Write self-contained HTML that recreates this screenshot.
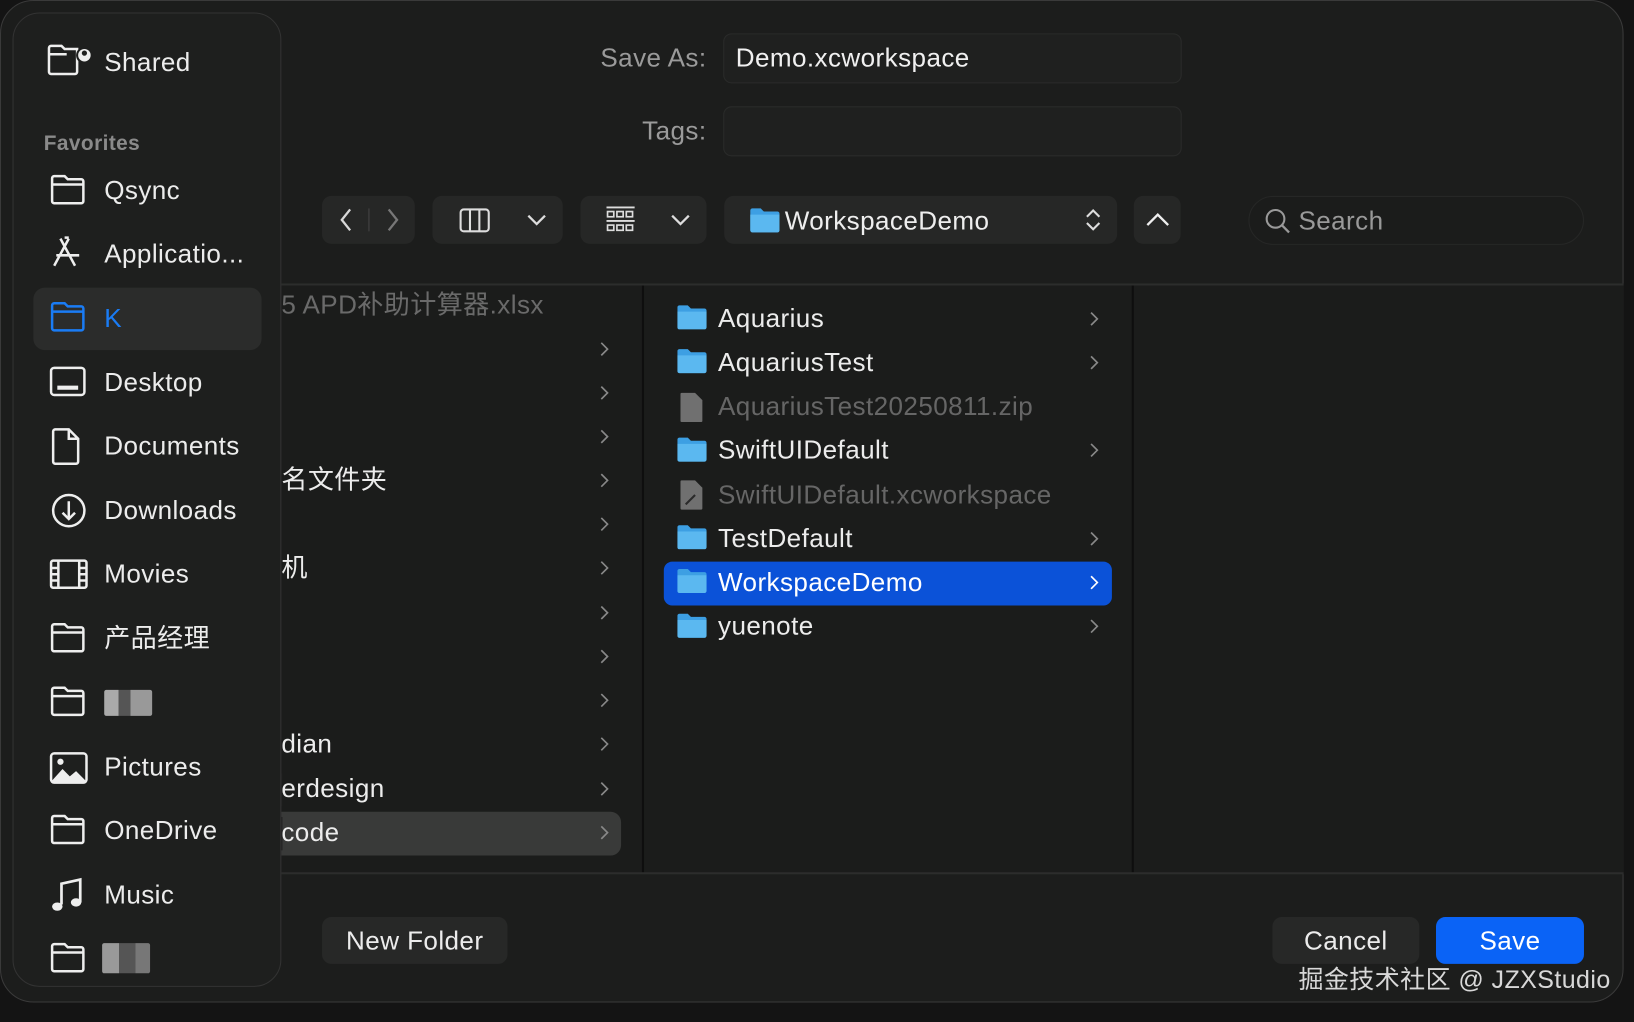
<!DOCTYPE html>
<html><head><meta charset="utf-8">
<style>
*{margin:0;padding:0;box-sizing:border-box}
html,body{width:1634px;height:1022px;overflow:hidden;background:#141414}
body{font-family:"Liberation Sans","Noto Sans CJK SC",sans-serif}
#s{position:absolute;left:0;top:0;width:1568px;height:981px;transform:scale(1.04209);transform-origin:0 0}
.a{position:absolute}
.t{position:absolute;font-size:25px;line-height:30px;color:#ececec;white-space:nowrap;letter-spacing:0.4px}
.win{left:0;top:0;width:1558px;height:962px;background:#1c1d1c;border:1.5px solid #3a3a3a;border-radius:32px;overflow:hidden}
.side{left:12px;top:12px;width:258px;height:935px;background:#1e1f1e;border:1.5px solid #333;border-radius:26px}
.btn{position:absolute;background:#262726;border-radius:9px}
.ic{position:absolute}
</style></head><body>
<div id="s">
<div class="a win"></div>
<div class="t" style="left:500px;top:41px;width:178px;text-align:right;color:#9a9a9a">Save As:</div>
<div class="a" style="left:694px;top:32px;width:440px;height:48px;background:#1f201f;border:1px solid #2a2b2a;border-radius:8px"></div>
<div class="t" style="left:706px;top:41px;color:#f0f0f0">Demo.xcworkspace</div>
<div class="t" style="left:500px;top:111px;width:178px;text-align:right;color:#9a9a9a">Tags:</div>
<div class="a" style="left:694px;top:102px;width:440px;height:48px;background:#1f201f;border:1px solid #2a2b2a;border-radius:8px"></div>

<div class="btn" style="left:309px;top:188px;width:89px;height:46px"></div>
<svg class="ic" style="left:309px;top:188px" width="89" height="46"><path d="M27 13 L19 23 L27 33" stroke="#d8d8d8" stroke-width="2.2" fill="none"/><path d="M64 13 L72 23 L64 33" stroke="#777" stroke-width="2.2" fill="none"/><path d="M45 12V34" stroke="#3a3a3a" stroke-width="1.5"/></svg>
<div class="btn" style="left:415px;top:188px;width:125px;height:46px"></div>
<svg class="ic" style="left:415px;top:188px" width="125" height="46"><rect x="27" y="13" width="27" height="21" rx="3" stroke="#ddd" stroke-width="2" fill="none"/><path d="M36 13V34M45 13V34" stroke="#ddd" stroke-width="2"/><path d="M92 19 L100 27 L108 19" stroke="#ddd" stroke-width="2.2" fill="none"/></svg>
<div class="btn" style="left:557px;top:188px;width:121px;height:46px"></div>
<svg class="ic" style="left:557px;top:188px" width="121" height="46"><path d="M25 11H52M25 24H52" stroke="#ddd" stroke-width="1.8"/><g fill="none" stroke="#ddd" stroke-width="1.6"><rect x="26" y="15" width="6" height="5"/><rect x="35" y="15" width="6" height="5"/><rect x="44" y="15" width="6" height="5"/><rect x="26" y="28" width="6" height="5"/><rect x="35" y="28" width="6" height="5"/><rect x="44" y="28" width="6" height="5"/></g><path d="M88 19 L96 27 L104 19" stroke="#ddd" stroke-width="2.2" fill="none"/></svg>
<div class="btn" style="left:695px;top:188px;width:377px;height:46px"></div>
<svg class="ic" style="left:719px;top:198px" width="30" height="26"><path d="M1 4a2 2 0 0 1 2-2h8l3 3h13a2 2 0 0 1 2 2v16a2 2 0 0 1-2 2H3a2 2 0 0 1-2-2z" fill="#3d9fe3"/><path d="M1 8h28v15a2 2 0 0 1-2 2H3a2 2 0 0 1-2-2z" fill="#5bb8f0"/></svg>
<div class="t" style="left:753px;top:197px;color:#eee">WorkspaceDemo</div>
<svg class="ic" style="left:1038px;top:198px" width="22" height="26"><path d="M5 10L11 4L17 10M5 16L11 22L17 16" stroke="#ddd" stroke-width="2" fill="none"/></svg>
<div class="btn" style="left:1088px;top:188px;width:45px;height:46px"></div>
<svg class="ic" style="left:1088px;top:188px" width="45" height="46"><path d="M13 28L23 18L33 28" stroke="#eee" stroke-width="2.2" fill="none"/></svg>
<div class="a" style="left:1198px;top:188px;width:322px;height:47px;border:1px solid #262726;border-radius:24px;background:#1b1c1b"></div>
<svg class="ic" style="left:1212px;top:198px" width="28" height="28"><circle cx="12" cy="12" r="8.5" stroke="#999" stroke-width="2" fill="none"/><path d="M18 18L25 25" stroke="#999" stroke-width="2.2"/></svg>
<div class="t" style="left:1246px;top:197px;color:#999">Search</div>

<div class="a" style="left:270px;top:272px;width:1288px;height:2px;background:#2c2d2c"></div>
<div class="a" style="left:270px;top:274px;width:1288px;height:564px;background:#1b1c1b"></div>
<div class="a" style="left:616px;top:274px;width:2px;height:564px;background:#0e0e0e"></div>
<div class="a" style="left:1086px;top:274px;width:2px;height:564px;background:#0e0e0e"></div>
<div class="a" style="left:270px;top:837px;width:1288px;height:1.5px;background:#2c2d2c"></div>

<div class="t" style="left:270px;top:278px;color:#6a6a6a">5 APD补助计算器.xlsx</div>
<div class="a" style="left:270px;top:779px;width:326px;height:42px;background:#393a39;border-radius:0 10px 10px 0"></div>
<div class="t" style="left:270px;top:446px">名文件夹</div>
<div class="t" style="left:270px;top:530px">机</div>
<div class="t" style="left:270px;top:699px">dian</div>
<div class="t" style="left:270px;top:742px">erdesign</div>
<div class="a" style="left:262px;top:742px;width:9px;height:32px;background:#1e1f1e"></div>
<div class="t" style="left:270px;top:784px">code</div>
<div class="a" style="left:264px;top:784px;width:7px;height:32px;background:#1e1f1e"></div>
<svg class="ic" style="left:574px;top:320px" width="14" height="500"><g stroke="#888" stroke-width="1.6" fill="none">
<path d="M3 9l6 6-6 6"/><path d="M3 9l6 6-6 6" transform="translate(0,42)"/><path d="M3 9l6 6-6 6" transform="translate(0,84)"/><path d="M3 9l6 6-6 6" transform="translate(0,126)"/><path d="M3 9l6 6-6 6" transform="translate(0,168)"/><path d="M3 9l6 6-6 6" transform="translate(0,210)"/><path d="M3 9l6 6-6 6" transform="translate(0,253)"/><path d="M3 9l6 6-6 6" transform="translate(0,295)"/><path d="M3 9l6 6-6 6" transform="translate(0,337)"/><path d="M3 9l6 6-6 6" transform="translate(0,379)"/><path d="M3 9l6 6-6 6" transform="translate(0,422)"/><path d="M3 9l6 6-6 6" transform="translate(0,464)"/></g></svg>

<div class="a" style="left:637px;top:539px;width:430px;height:42px;background:#0b52d8;border-radius:8px"></div>
<svg class="ic" style="left:650px;top:292px" width="30" height="330">
<defs><g id="bf"><path d="M0 3a2 2 0 0 1 2-2h8l3 3h13a2 2 0 0 1 2 2v16a2 2 0 0 1-2 2H2a2 2 0 0 1-2-2z" fill="#3d9fe3"/><path d="M0 7h28v15a2 2 0 0 1-2 2H2a2 2 0 0 1-2-2z" fill="#5bb8f0"/></g></defs>
<use href="#bf" y="0"/><use href="#bf" y="42"/><use href="#bf" y="127"/><use href="#bf" y="211"/><use href="#bf" y="253"/><use href="#bf" y="296"/>
<path d="M4 85h13l7 7v20a1 1 0 0 1-1 1H4a1 1 0 0 1-1-1V86a1 1 0 0 1 1-1z" fill="#707070"/>
<path d="M4 169h13l7 7v20a1 1 0 0 1-1 1H4a1 1 0 0 1-1-1V170a1 1 0 0 1 1-1z" fill="#707070"/><path d="M8 192l9-9" stroke="#2a2a2a" stroke-width="2"/>
</svg>
<div class="t" style="left:689px;top:291px">Aquarius</div>
<div class="t" style="left:689px;top:333px">AquariusTest</div>
<div class="t" style="left:689px;top:375px;color:#666">AquariusTest20250811.zip</div>
<div class="t" style="left:689px;top:417px">SwiftUIDefault</div>
<div class="t" style="left:689px;top:460px;color:#666">SwiftUIDefault.xcworkspace</div>
<div class="t" style="left:689px;top:502px">TestDefault</div>
<div class="t" style="left:689px;top:544px;color:#fff">WorkspaceDemo</div>
<div class="t" style="left:689px;top:586px">yuenote</div>
<svg class="ic" style="left:1044px;top:291px" width="14" height="330"><g stroke="#888" stroke-width="1.6" fill="none">
<path d="M3 9l6 6-6 6"/><path d="M3 51l6 6-6 6"/><path d="M3 135l6 6-6 6"/><path d="M3 220l6 6-6 6"/><path d="M3 262l6 6-6 6" stroke="#fff"/><path d="M3 304l6 6-6 6"/></g></svg>

<div class="btn" style="left:309px;top:880px;width:178px;height:45px;background:#272827"></div>
<div class="t" style="left:309px;top:888px;width:178px;text-align:center">New Folder</div>
<div class="btn" style="left:1221px;top:880px;width:141px;height:45px;background:#272827"></div>
<div class="t" style="left:1221px;top:888px;width:141px;text-align:center">Cancel</div>
<div class="btn" style="left:1378px;top:880px;width:142px;height:45px;background:#0a63f6"></div>
<div class="t" style="left:1378px;top:888px;width:142px;text-align:center;color:#fff">Save</div>
<div class="t" style="left:1246px;top:926px;font-size:24px;color:#d8d8d8">掘金技术社区 @ JZXStudio</div>

<div class="a side"></div>
<div class="a" style="left:32px;top:276px;width:219px;height:60px;background:#2b2c2b;border-radius:11px"></div>
<svg class="ic" style="left:44px;top:40px" width="220" height="900"><g fill="none" stroke="#eee" stroke-width="2.4">
<path d="M3 6a2 2 0 0 1 2-2h10l3 3h12v22a2 2 0 0 1-2 2H5a2 2 0 0 1-2-2z M3 12h17"/>
<path d="M6 131a2 2 0 0 1 2-2h10l3 3h13a2 2 0 0 1 2 2v19a2 2 0 0 1-2 2H8a2 2 0 0 1-2-2z M6 137h30"/>
<path d="M22 189l-14 26M14 189l14 26M10 205h22M18 188h4"/>
<path d="M6 253a2 2 0 0 1 2-2h10l3 3h13a2 2 0 0 1 2 2v19a2 2 0 0 1-2 2H8a2 2 0 0 1-2-2z M6 259h30" stroke="#1a7cf5"/>
<rect x="5" y="313" width="32" height="26" rx="3"/><path d="M11 332h20" stroke-width="4"/>
<path d="M9 372h13l9 9v22a2 2 0 0 1-2 2H9a2 2 0 0 1-2-2V374a2 2 0 0 1 2-2z M22 372v9h9"/>
<circle cx="22" cy="450" r="15"/><path d="M22 441v16M16 452l6 6 6-6"/>
<rect x="5" y="498" width="34" height="26" rx="2"/><path d="M12 498v26M32 498v26M5 505h7M5 511h7M5 517h7M32 505h7M32 511h7M32 517h7"/>
<path d="M6 561a2 2 0 0 1 2-2h10l3 3h13a2 2 0 0 1 2 2v19a2 2 0 0 1-2 2H8a2 2 0 0 1-2-2z M6 567h30"/>
<path d="M6 622a2 2 0 0 1 2-2h10l3 3h13a2 2 0 0 1 2 2v19a2 2 0 0 1-2 2H8a2 2 0 0 1-2-2z M6 628h30"/>
<rect x="5" y="683" width="34" height="28" rx="3"/>
<path d="M6 745a2 2 0 0 1 2-2h10l3 3h13a2 2 0 0 1 2 2v19a2 2 0 0 1-2 2H8a2 2 0 0 1-2-2z M6 751h30"/>
<path d="M6 868a2 2 0 0 1 2-2h10l3 3h13a2 2 0 0 1 2 2v19a2 2 0 0 1-2 2H8a2 2 0 0 1-2-2z M6 874h30"/>
</g>
<circle cx="37" cy="13" r="7" fill="#eee" stroke="#1e1f1e" stroke-width="2"/><circle cx="37" cy="11" r="2.5" fill="#1e1f1e"/>
<path d="M6 709l10-11 7 7 6-5 9 9v2H6z" fill="#eee"/><circle cx="14" cy="691" r="3" fill="#eee"/>
<path d="M15 828v-20l18-4v22" stroke="#eee" stroke-width="2.6" fill="none"/><ellipse cx="11" cy="830" rx="5" ry="4" fill="#eee"/><ellipse cx="29" cy="826" rx="5" ry="4" fill="#eee"/>
</svg>
<div class="t" style="left:100px;top:45px">Shared</div>
<div class="t" style="left:42px;top:123px;font-size:20px;color:#8a8a8a;font-weight:bold">Favorites</div>
<div class="t" style="left:100px;top:168px">Qsync</div>
<div class="t" style="left:100px;top:229px">Applicatio...</div>
<div class="t" style="left:100px;top:291px;color:#1a7cf5">K</div>
<div class="t" style="left:100px;top:352px">Desktop</div>
<div class="t" style="left:100px;top:413px">Documents</div>
<div class="t" style="left:100px;top:475px">Downloads</div>
<div class="t" style="left:100px;top:536px">Movies</div>
<div class="t" style="left:100px;top:598px">产品经理</div>
<div class="a" style="left:100px;top:662px;width:46px;height:25px;background:linear-gradient(90deg,#aaa 0 30%,#555 30% 55%,#999 55% 100%);border-radius:2px"></div>
<div class="t" style="left:100px;top:721px">Pictures</div>
<div class="t" style="left:100px;top:782px">OneDrive</div>
<div class="t" style="left:100px;top:844px">Music</div>
<div class="a" style="left:98px;top:905px;width:46px;height:29px;background:linear-gradient(90deg,#999 0 35%,#555 35% 70%,#777 70%);border-radius:2px"></div>
</div>
</body></html>
